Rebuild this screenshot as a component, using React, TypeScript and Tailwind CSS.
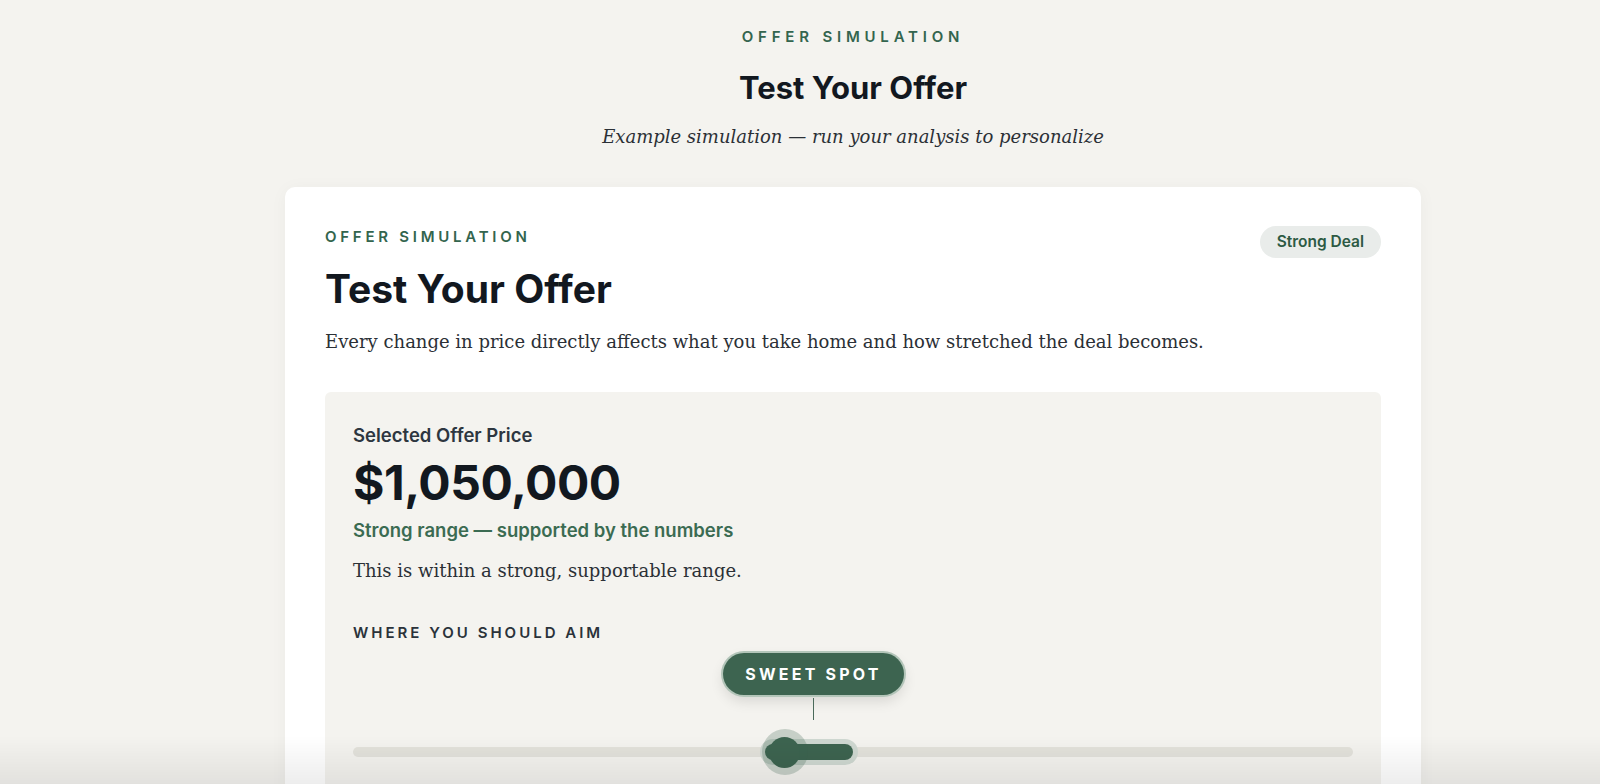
import React from "react";

const sans = "font-['Inter',sans-serif]";
const serif = "font-['DejaVu_Serif',serif]";

function AimSlider() {
  return (
    <div className="relative mt-[10px] h-[140px]">
      {/* sweet spot marker */}
      <div className="absolute left-[370px] top-0 flex w-[181px] flex-col items-center">
        <div className="flex h-[42px] w-[181px] items-center justify-center rounded-full bg-[#3d6450] shadow-[0_0_0_2px_#b3c5b9,0_6px_14px_rgba(0,0,0,0.12)]">
          <span className="text-[16px] font-bold tracking-[0.2em] text-white">SWEET SPOT</span>
        </div>
        <div className="mt-[3px] h-[22px] w-px bg-[#4a6a5a]" />
      </div>

      {/* track */}
      <div className="absolute left-0 right-0 top-[94px] h-[10px] rounded-full bg-[#e3e2db]" />

      {/* selected range */}
      <div className="absolute left-[407px] top-[86px] h-[26px] w-[98px] rounded-full bg-[#cfd8d1]" />
      <div className="absolute left-[412px] top-[91px] h-[16px] w-[88px] rounded-full bg-[#3d6450]" />

      {/* thumb */}
      <div className="absolute left-[409px] top-[76px] h-[46px] w-[46px] rounded-full bg-[#3d6450]/25" />
      <div className="absolute left-[416px] top-[84px] h-[31px] w-[31px] rounded-full bg-[#3d6450]" />
    </div>
  );
}

export default function App() {
  return (
    <div className={`min-h-screen bg-[#f4f3ef] pl-[106px] ${sans}`}>
      <div className="mx-auto w-[1136px] pt-[27px]">
        <header className="text-center">
          <p className="text-[15px] font-semibold leading-[20px] tracking-[0.32em] text-[#33654e]">
            OFFER SIMULATION
          </p>
          <h1 className="mt-[21px] text-[31px] font-bold leading-[40px] text-[#12181f]">
            Test Your Offer
          </h1>
          <p className={`mt-[15px] text-[18px] italic leading-[28px] text-[#2b3036] ${serif}`}>
            Example simulation — run your analysis to personalize
          </p>
        </header>

        <section className="mt-[36px] rounded-[10px] bg-white px-[40px] pt-[40px] pb-[60px] shadow-[0_2px_18px_rgba(0,0,0,0.04)]">
          <div className="flex items-start justify-between">
            <div>
              <p className="text-[15px] font-semibold leading-[20px] tracking-[0.25em] text-[#33654e]">
                OFFER SIMULATION
              </p>
              <h2 className="mt-[18px] text-[39px] font-bold leading-[48px] text-[#12181f]">
                Test Your Offer
              </h2>
            </div>
            <span className="mt-[-1px] rounded-full bg-[#e9ecea] px-[17px] py-[5px] text-[15.5px] font-semibold leading-[22px] text-[#2d5a44]">
              Strong Deal
            </span>
          </div>
          <p className={`mt-[15px] text-[18px] leading-[28px] text-[#2b3036] ${serif}`}>
            Every change in price directly affects what you take home and how stretched the deal becomes.
          </p>

          <div className="mt-[36px] rounded-[6px] bg-[#f4f3ef] px-[28px] pt-[31px]">
            <p className="text-[18.5px] font-semibold leading-[24px] text-[#2d3640]">Selected Offer Price</p>
            <p className="mt-[8px] text-[48px] font-bold leading-[56px] tracking-[-0.01em] text-[#12181f]">
              $1,050,000
            </p>
            <p className="mt-[7px] text-[18.5px] font-semibold leading-[24px] text-[#3b6b52]">
              Strong range — supported by the numbers
            </p>
            <p className={`mt-[15px] text-[18px] leading-[28px] text-[#2b3036] ${serif}`}>
              This is within a strong, supportable range.
            </p>
            <p className="mt-[38px] text-[15px] font-semibold leading-[20px] tracking-[0.2em] text-[#2a323a]">
              WHERE YOU SHOULD AIM
            </p>
            <AimSlider />
          </div>
        </section>
      </div>

      {/* bottom fade */}
      <div className="pointer-events-none fixed bottom-0 left-0 right-0 h-[48px] bg-gradient-to-b from-transparent to-black/[0.07]" />
    </div>
  );
}
